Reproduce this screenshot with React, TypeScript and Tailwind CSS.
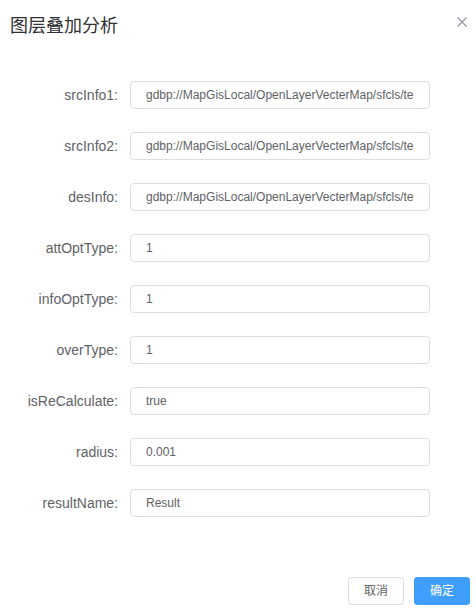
const fields: { label: string; value: string }[] = [
  { label: "srcInfo1:", value: "gdbp://MapGisLocal/OpenLayerVecterMap/sfcls/test1" },
  { label: "srcInfo2:", value: "gdbp://MapGisLocal/OpenLayerVecterMap/sfcls/test2" },
  { label: "desInfo:", value: "gdbp://MapGisLocal/OpenLayerVecterMap/sfcls/test3" },
  { label: "attOptType:", value: "1" },
  { label: "infoOptType:", value: "1" },
  { label: "overType:", value: "1" },
  { label: "isReCalculate:", value: "true" },
  { label: "radius:", value: "0.001" },
  { label: "resultName:", value: "Result" },
];

const font = { fontFamily: '"Liberation Sans", Arial, "Noto Sans CJK SC", sans-serif' };

const App = () => {
  return (
    <div
      className="relative w-[476px] h-[610px] bg-white flex flex-col overflow-hidden"
      style={font}
    >
      <div className="pt-[14px] pl-[10px]">
        <span className="text-[18px] leading-[24px] text-[#303133]">图层叠加分析</span>
      </div>
      <button className="absolute top-[17px] right-[9px] w-[10px] h-[10px] text-[#909399]">
        <svg viewBox="0 0 10 10" width="10" height="10" fill="none" stroke="currentColor" strokeWidth="1.1">
          <path d="M0.5 0.5 L9.5 9.5 M9.5 0.5 L0.5 9.5" />
        </svg>
      </button>

      <div className="mt-[42px] flex flex-col gap-[23px]">
        {fields.map((f) => (
          <div key={f.label} className="flex items-center h-[28px]">
            <label className="w-[130px] pr-[12px] text-right text-[14px] leading-[28px] text-[#606266]">
              {f.label}
            </label>
            <input
              readOnly
              value={f.value}
              className="w-[300px] h-[28px] px-[15px] border border-[#DCDFE6] rounded-[4px] text-[12px] text-[#606266] outline-none bg-white"
            />
          </div>
        ))}
      </div>

      <div className="mt-auto pb-[5px] pr-[6px] flex justify-end gap-[10px]">
        <button className="w-[56px] h-[28px] border border-[#DCDFE6] rounded-[3px] bg-white text-[12px] text-[#606266]">
          取消
        </button>
        <button className="w-[56px] h-[28px] border border-[#409EFF] rounded-[3px] bg-[#409EFF] text-[12px] text-white">
          确定
        </button>
      </div>
    </div>
  );
};

export default App;
